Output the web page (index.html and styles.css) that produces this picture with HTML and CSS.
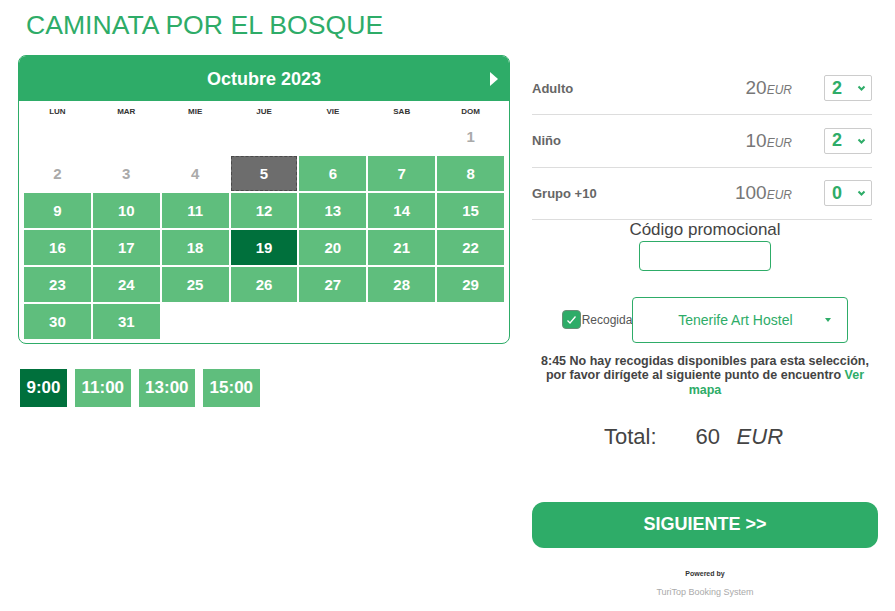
FILE: index.html
```html
<!DOCTYPE html>
<html lang="es">
<head>
<meta charset="utf-8">
<title>Caminata por el bosque</title>
<link rel="stylesheet" href="styles.css">
</head>
<body>
<div class="page">
  <h1 class="title">CAMINATA POR EL BOSQUE</h1>
  <div class="main">
    <div class="left">
      <div class="calendar">
        <div class="cal-head">
          <span></span>
          <span class="month">Octubre 2023</span>
          <span class="next-arrow"></span>
        </div>
        <div class="cal-body">
          <div class="dow-row">
            <div>LUN</div><div>MAR</div><div>MIE</div><div>JUE</div><div>VIE</div><div>SAB</div><div>DOM</div>
          </div>
          <div class="days">
            <div class="day empty"></div><div class="day empty"></div><div class="day empty"></div><div class="day empty"></div><div class="day empty"></div><div class="day empty"></div><div class="day off">1</div>
            <div class="day off">2</div><div class="day off">3</div><div class="day off">4</div><div class="day today">5</div><div class="day">6</div><div class="day">7</div><div class="day">8</div>
            <div class="day">9</div><div class="day">10</div><div class="day">11</div><div class="day">12</div><div class="day">13</div><div class="day">14</div><div class="day">15</div>
            <div class="day">16</div><div class="day">17</div><div class="day">18</div><div class="day sel">19</div><div class="day">20</div><div class="day">21</div><div class="day">22</div>
            <div class="day">23</div><div class="day">24</div><div class="day">25</div><div class="day">26</div><div class="day">27</div><div class="day">28</div><div class="day">29</div>
            <div class="day">30</div><div class="day">31</div>
          </div>
        </div>
      </div>
      <div class="times">
        <div class="time sel">9:00</div>
        <div class="time">11:00</div>
        <div class="time">13:00</div>
        <div class="time">15:00</div>
      </div>
    </div>

    <div class="right">
      <div class="ticket">
        <span class="t-name">Adulto</span>
        <span class="t-price">20<em>EUR</em></span>
        <div class="qty"><span>2</span><svg width="9" height="6" viewBox="0 0 9 6"><polyline points="1.5,1.5 4.5,4.5 7.5,1.5" fill="none" stroke="#2eac68" stroke-width="2"/></svg></div>
      </div>
      <div class="ticket">
        <span class="t-name">Niño</span>
        <span class="t-price">10<em>EUR</em></span>
        <div class="qty"><span>2</span><svg width="9" height="6" viewBox="0 0 9 6"><polyline points="1.5,1.5 4.5,4.5 7.5,1.5" fill="none" stroke="#2eac68" stroke-width="2"/></svg></div>
      </div>
      <div class="ticket">
        <span class="t-name">Grupo +10</span>
        <span class="t-price">100<em>EUR</em></span>
        <div class="qty"><span>0</span><svg width="9" height="6" viewBox="0 0 9 6"><polyline points="1.5,1.5 4.5,4.5 7.5,1.5" fill="none" stroke="#2eac68" stroke-width="2"/></svg></div>
      </div>

      <div class="promo-label">Código promocional</div>
      <input class="promo-input" type="text" aria-label="Código promocional">

      <div class="pickup">
        <span class="check"><svg width="11" height="10" viewBox="0 0 11 10"><polyline points="1.5,5.5 4,8 9.5,1.5" fill="none" stroke="#fff" stroke-width="1.3"/></svg></span>
        <span class="pick-label">Recogida</span>
        <div class="pick-select">
          <span class="pick-text">Tenerife Art Hostel</span>
          <span class="caret"></span>
        </div>
      </div>

      <div class="pick-msg">8:45 No hay recogidas disponibles para esta selección, por favor dirígete al siguiente punto de encuentro <a href="#">Ver mapa</a></div>

      <div class="total">
        <span class="total-label">Total:</span>
        <span class="total-num">60</span>
        <em class="total-cur">EUR</em>
      </div>

      <button class="next-btn" type="button">SIGUIENTE &gt;&gt;</button>

      <div class="powered">Powered by</div>
      <div class="brand">TuriTop Booking System</div>
    </div>
  </div>
</div>
</body>
</html>
```

FILE: styles.css
```css
body {
  margin: 0;
  background: #fff;
  font-family: "Liberation Sans", Arial, sans-serif;
}

.page {
  width: 895px;
  box-sizing: border-box;
  padding: 0 17px 0 18px;
}

.title {
  margin: 0;
  padding: 9px 0 14px 8px;
  font-size: 26.6px;
  line-height: 32px;
  font-weight: normal;
  color: #2eac68;
}

.main {
  display: flex;
  align-items: flex-start;
}

.left {
  width: 492px;
}

/* Calendar */
.calendar {
  border: 1px solid #2eac68;
  border-radius: 8px;
  overflow: hidden;
}

.cal-head {
  height: 45px;
  background: #2eac68;
  display: grid;
  grid-template-columns: 1fr auto 1fr;
  align-items: center;
  color: #fff;
  font-weight: bold;
  font-size: 18px;
}

.month {
  line-height: 22px;
}

.next-arrow {
  justify-self: end;
  margin-right: 11px;
  width: 0;
  height: 0;
  border-left: 8px solid #fff;
  border-top: 7px solid transparent;
  border-bottom: 7px solid transparent;
}

.cal-body {
  padding: 0 5px 4px;
}

.dow-row {
  display: grid;
  grid-template-columns: repeat(7, 1fr);
  column-gap: 2px;
  height: 18px;
  box-sizing: border-box;
  padding-top: 6px;
  font-size: 8px;
  line-height: 10px;
  font-weight: bold;
  color: #333;
  text-align: center;
}

.days {
  display: grid;
  grid-template-columns: repeat(7, 1fr);
  grid-auto-rows: 35px;
  gap: 2px;
}

.day {
  display: flex;
  align-items: center;
  justify-content: center;
  font-size: 15px;
  font-weight: bold;
  color: #fff;
  background: #5fbe7d;
}

.day.empty {
  background: none;
}

.day.off {
  background: none;
  color: #aaa;
}

.day.today {
  background: #6d6d6d;
  border: 1px dashed #4a4a4a;
}

.day.sel {
  background: #00703c;
}

/* Times */
.times {
  display: flex;
  gap: 8px;
  margin-top: 25px;
  padding-left: 2px;
}

.time {
  height: 38px;
  line-height: 38px;
  padding: 0 6.5px;
  font-size: 17px;
  font-weight: bold;
  color: #fff;
  background: #5fbe7d;
}

.time.sel {
  background: #00703c;
}

/* Right column */
.right {
  width: 346px;
  margin-left: 22px;
  padding-top: 7.5px;
}

.ticket {
  width: 340px;
  height: 52.5px;
  box-sizing: border-box;
  border-bottom: 1px solid #ddd;
  display: flex;
  align-items: center;
}

.t-name {
  flex: 1;
  font-size: 13px;
  font-weight: bold;
  color: #666;
}

.t-price {
  margin-right: 32px;
  font-size: 19px;
  color: #777;
}

.t-price em {
  font-size: 12px;
  font-style: italic;
}

.qty {
  width: 48px;
  height: 26px;
  box-sizing: border-box;
  border: 1px solid #ccc;
  border-radius: 2px;
  display: flex;
  align-items: center;
  justify-content: space-between;
  padding: 0 5px 0 7px;
  color: #2eac68;
  font-weight: bold;
  font-size: 18px;
}

.qty svg {
  display: block;
}

.promo-label {
  text-align: center;
  font-size: 17px;
  line-height: 20px;
  color: #444;
}

.promo-input {
  display: block;
  width: 132px;
  height: 30px;
  box-sizing: border-box;
  margin: 0.5px auto 0;
  padding: 0;
  border: 1px solid #2eac68;
  border-radius: 4px;
  background: #fff;
}

.pickup {
  display: flex;
  justify-content: center;
  align-items: center;
  margin-top: 26px;
}

.check {
  width: 19px;
  height: 19px;
  box-sizing: border-box;
  border-radius: 4px;
  background: #2eac68;
  border: 1px solid #6a8f78;
  display: flex;
  align-items: center;
  justify-content: center;
}

.check svg {
  display: block;
}

.pick-label {
  margin-left: 1px;
  font-size: 12px;
  color: #555;
}

.pick-select {
  width: 216px;
  height: 46px;
  box-sizing: border-box;
  border: 1px solid #2eac68;
  border-radius: 4px;
  display: flex;
  align-items: center;
  padding: 0 16px 0 12px;
  color: #2eac68;
  font-size: 14px;
}

.pick-text {
  flex: 1;
  text-align: center;
}

.caret {
  width: 0;
  height: 0;
  border-top: 4px solid #2eac68;
  border-left: 3px solid transparent;
  border-right: 3px solid transparent;
}

.pick-msg {
  margin-top: 11px;
  text-align: center;
  font-size: 12.5px;
  line-height: 14.5px;
  font-weight: bold;
  color: #444;
}

.pick-msg a {
  color: #2eac68;
  text-decoration: none;
}

.total {
  margin-top: 26.5px;
  display: flex;
  align-items: center;
  padding-left: 72px;
  font-size: 22px;
  line-height: 26px;
  color: #444;
}

.total-label {
  margin-right: 39px;
}

.total-num {
  margin-right: 16.5px;
}

.total-cur {
  font-style: italic;
}

.next-btn {
  display: block;
  margin-top: 52px;
  width: 346px;
  height: 46px;
  border: none;
  border-radius: 12px;
  background: #2eac68;
  color: #fff;
  font-family: "Liberation Sans", Arial, sans-serif;
  font-weight: bold;
  font-size: 18px;
  text-align: center;
  padding: 0;
}

.powered {
  margin-top: 21px;
  text-align: center;
  font-size: 7px;
  line-height: 10px;
  font-weight: bold;
  color: #333;
}

.brand {
  margin-top: 7px;
  text-align: center;
  font-size: 9px;
  line-height: 12px;
  color: #aaa;
}
```
